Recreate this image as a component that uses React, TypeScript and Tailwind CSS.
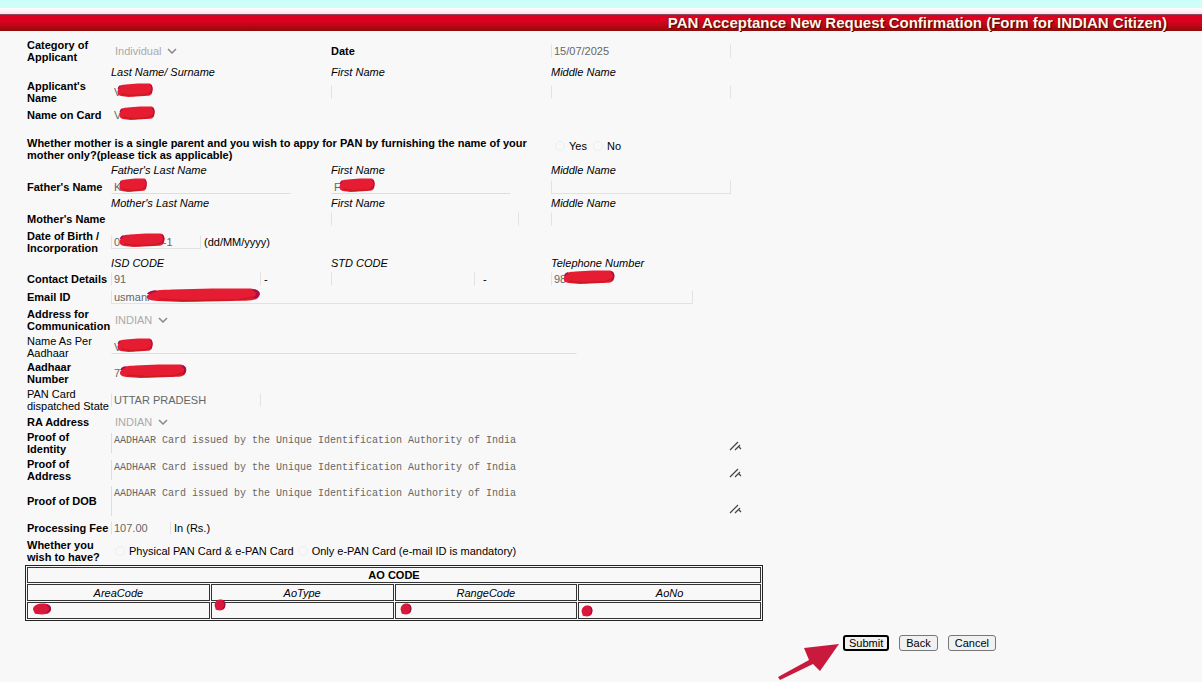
import { type ReactNode } from "react";
import clsx from "clsx";

const PROOF = "AADHAAR Card issued by the Unique Identification Authority of India";

// Hand-drawn marker stroke that hides private values
function Scribble({ className }: { className: string }) {
  return (
    <svg viewBox="0 0 100 30" preserveAspectRatio="none" className={clsx("absolute pointer-events-none", className)} aria-hidden="true">
      <path d="M3 14C7 3 14 4 24 3L58 1L91 1C99 3 101 12 97 22C93 29 84 27 75 28L32 30L11 28C3 27-1 21 3 14Z" fill="#e51c32" />
      <path d="M12 24L42 27L82 25L94 19" fill="none" stroke="#c51c20" strokeWidth="3" />
      <path d="M3 13C5 7 8 7 10 6M93 4C99 8 98 16 94 22" fill="none" stroke="#a80f49" strokeWidth="3" />
    </svg>
  );
}

// Single marker dab used in the narrow AO cells
function Dab({ className }: { className: string }) {
  return (
    <svg viewBox="0 0 20 20" preserveAspectRatio="none" className={clsx("absolute pointer-events-none", className)} aria-hidden="true">
      <path d="M1 11C1 4 6 1 11 1C17 1 19 5 19 10C19 16 16 19 10 19L3 18Z" fill="#d9183c" />
      <path d="M15 3C19 7 19 12 15 16" fill="none" stroke="#8f1442" strokeWidth="2" />
    </svg>
  );
}

function Row({ id, label, plain, height, children }: { id?: string; label: string; plain?: boolean; height: string; children: ReactNode }) {
  return (
    <div className={clsx("grid grid-cols-[86px_220px_220px_1fr] items-center", height)}>
      <label htmlFor={id} className={clsx("pl-0.5", !plain && "font-bold")}>{label}</label>
      {children}
    </div>
  );
}

function Hints({ items, height }: { items: string[]; height: string }) {
  return (
    <div className={clsx("grid grid-cols-[86px_220px_220px_1fr] items-center italic", height)}>
      <span />
      {items.map((item, i) => (
        <span key={i}>{item}</span>
      ))}
    </div>
  );
}

function Field({ id, label, value = "", width, edges = "border-transparent", scribble }: {
  id?: string;
  label: string;
  value?: string;
  width: string;
  edges?: string;
  scribble?: string;
}) {
  return (
    <span className={clsx("relative block", width)}>
      <input
        id={id}
        aria-label={label}
        defaultValue={value}
        className={clsx("block w-full h-3.5 pl-0.5 bg-transparent border text-[11px] leading-3 text-[#666] outline-none", edges)}
      />
      {scribble && <Scribble className={scribble} />}
    </span>
  );
}

function Dropdown({ id, value, width }: { id: string; value: string; width: string }) {
  return (
    <span className={clsx("relative block", width)}>
      <select id={id} className="block w-full h-3.5 pl-1 appearance-none bg-transparent text-[11px] leading-3 text-[#aaa]">
        <option>{value}</option>
      </select>
      <svg viewBox="0 0 10 6" className="absolute right-0 top-1 w-2.5 h-1.5 pointer-events-none" aria-hidden="true">
        <path d="M1 1L5 5L9 1" fill="none" stroke="#888" strokeWidth="1.5" />
      </svg>
    </span>
  );
}

function Proof({ id, height }: { id: string; height: string }) {
  return (
    <span className="relative col-span-3 block w-[631px]">
      <textarea
        id={id}
        defaultValue={PROOF}
        className={clsx("block w-full px-0.5 pt-0.5 resize-none overflow-hidden bg-transparent border-l border-[#ddd] font-['Liberation_Mono',monospace] text-[10px] leading-3 text-[#666] outline-none", height)}
      />
      <svg viewBox="0 0 13 10" className="absolute right-0 bottom-0.5 w-[13px] h-2.5 pointer-events-none" aria-hidden="true">
        <path d="M1 9L9 1M6 9L11 4M10 6L12 8" fill="none" stroke="#444" strokeWidth="1.2" />
      </svg>
    </span>
  );
}

function Radio({ name, text }: { name: string; text: string }) {
  return (
    <label className="flex items-center gap-1">
      <input type="radio" name={name} className="size-2.5 appearance-none rounded-full border border-[#eee]" />
      {text}
    </label>
  );
}

const left = "border-transparent border-l-[#e2e2e2]";
const sides = "border-transparent border-x-[#e2e2e2]";
const bottom = "border-transparent border-b-[#dedede]";
const open = "border-[#e2e2e2] border-t-transparent";

const aoColumns = [
  { name: "AreaCode", dab: "left-1 top-0 w-5 h-3" },
  { name: "AoType", dab: "left-0.5 -top-1 w-3 h-3" },
  { name: "RangeCode", dab: "left-1 top-0 w-3 h-3" },
  { name: "AoNo", dab: "left-0.5 top-0.5 w-3 h-3" },
];

const buttonClass = "h-4 rounded-[3px] bg-[#f1f1f1] text-[11px] leading-3";

export default function App() {
  return (
    <div className="min-h-screen bg-[#f8f8f8] font-['Liberation_Sans',Arial,sans-serif] text-[11px] leading-3 text-black">
      <header>
        <div className="h-2 bg-[#ccfff8]" />
        <div className="h-1.5 bg-linear-to-b from-white to-[#fbe0ef]" />
        <div className="h-[17px] pr-[35px] border-t border-[#8c4a5b] bg-linear-to-b from-[#dc0020] from-40% to-[#900b08] text-right">
          <h1 className="text-[15px] leading-4 font-bold text-[#fff5e4] [text-shadow:1px_1px_0_#5b0808,-1px_0_0_#8b0808]">
            PAN Acceptance New Request Confirmation (Form for INDIAN Citizen)
          </h1>
        </div>
      </header>

      <form className="pt-[7px] pl-[25px]" onSubmit={(e) => e.preventDefault()}>
        <Row id="category" label="Category of Applicant" height="h-[26px]">
          <Dropdown id="category" value="Individual" width="w-[66px]" />
          <label htmlFor="date" className="font-bold">Date</label>
          <Field id="date" label="Date" value="15/07/2025" width="w-[180px]" edges={sides} />
        </Row>
        <Hints items={["Last Name/ Surname", "First Name", "Middle Name"]} height="h-4" />
        <Row id="last" label="Applicant's Name" height="h-6">
          <Field id="last" label="Last Name" value="V" width="w-[180px]" scribble="left-1.5 -top-0.5 w-9 h-3.5" />
          <Field label="First Name" width="w-[188px]" edges={left} />
          <Field label="Middle Name" width="w-[180px]" edges={sides} />
        </Row>
        <Row id="card" label="Name on Card" height="h-[22px]">
          <Field id="card" label="Name on Card" value="V" width="w-[180px]" scribble="left-2 -top-0.5 w-9 h-3.5" />
        </Row>

        <fieldset className="mt-2.5 grid grid-cols-[526px_1fr] h-[26px] items-center">
          <span className="w-[520px] pl-0.5 font-bold">
            Whether mother is a single parent and you wish to appy for PAN by furnishing the name of your mother only?(please tick as applicable)
          </span>
          <span className="flex gap-1.5 pl-1 pt-1 self-start">
            <Radio name="mother" text="Yes" />
            <Radio name="mother" text="No" />
          </span>
        </fieldset>

        <Hints items={["Father's Last Name", "First Name", "Middle Name"]} height="h-4" />
        <Row id="father" label="Father's Name" height="h-[18px]">
          <Field id="father" label="Father's Last Name" value="K" width="w-[180px]" edges={bottom} scribble="left-2 -top-0.5 w-7 h-3.5" />
          <Field label="Father's First Name" value="F" width="w-[180px]" edges={bottom} scribble="left-2 -top-0.5 w-9 h-3.5" />
          <Field label="Father's Middle Name" width="w-[180px]" edges={open} />
        </Row>
        <Hints items={["Mother's Last Name", "First Name", "Middle Name"]} height="h-3.5" />
        <Row id="mother" label="Mother's Name" height="h-[18px]">
          <Field id="mother" label="Mother's Last Name" width="w-[180px]" />
          <Field label="Mother's First Name" width="w-[188px]" edges={sides} />
          <Field label="Mother's Middle Name" width="w-[180px]" edges={left} />
        </Row>
        <Row id="dob" label="Date of Birth / Incorporation" height="h-7">
          <span className="flex items-center gap-[3px]">
            <Field id="dob" label="Date of Birth" value="0--/---/------1" width="w-[90px]" edges={open} scribble="left-2 -top-0.5 w-[46px] h-3.5" />
            (dd/MM/yyyy)
          </span>
        </Row>
        <Hints items={["ISD CODE", "STD CODE", "Telephone Number"]} height="h-3.5" />
        <Row id="isd" label="Contact Details" height="h-[18px]">
          <span className="flex items-center gap-[3px]">
            <Field id="isd" label="ISD Code" value="91" width="w-[150px]" edges={sides} />-
          </span>
          <span className="flex items-center gap-2">
            <Field label="STD Code" width="w-36" edges={sides} />-
          </span>
          <Field label="Telephone Number" value="98" width="w-[150px]" edges={left} scribble="left-3 -top-0.5 w-[52px] h-3.5" />
        </Row>
        <Row id="email" label="Email ID" height="h-[18px]">
          <Field id="email" label="Email ID" value="usmani" width="col-span-3 w-[582px]" edges={open} scribble="left-[34px] -top-0.5 w-[116px] h-3.5" />
        </Row>
        <Row id="communication" label="Address for Communication" height="h-7">
          <Dropdown id="communication" value="INDIAN" width="w-[57px]" />
        </Row>
        <Row id="aadhaar-name" label="Name As Per Aadhaar" plain height="h-[26px]">
          <Field id="aadhaar-name" label="Name As Per Aadhaar" value="V" width="col-span-3 w-[466px]" edges={bottom} scribble="left-1.5 -top-0.5 w-9 h-3.5" />
        </Row>
        <Row id="aadhaar" label="Aadhaar Number" height="h-[26px]">
          <Field id="aadhaar" label="Aadhaar Number" value="7" width="w-[90px]" scribble="left-2 -top-0.5 w-[68px] h-3.5" />
        </Row>
        <Row id="state" label="PAN Card dispatched State" plain height="h-7">
          <Field id="state" label="PAN Card dispatched State" value="UTTAR PRADESH" width="w-[150px]" edges={sides} />
        </Row>
        <Row id="ra" label="RA Address" height="h-4">
          <Dropdown id="ra" value="INDIAN" width="w-[57px]" />
        </Row>
        <Row id="identity" label="Proof of Identity" height="h-[26px]">
          <Proof id="identity" height="h-5" />
        </Row>
        <Row id="address" label="Proof of Address" height="h-7">
          <Proof id="address" height="h-5" />
        </Row>
        <Row id="proof-dob" label="Proof of DOB" height="h-[34px]">
          <Proof id="proof-dob" height="h-[30px]" />
        </Row>
        <Row id="fee" label="Processing Fee" height="h-5">
          <span className="flex items-center gap-[3px]">
            <Field id="fee" label="Processing Fee" value="107.00" width="w-[60px]" edges={sides} />
            In (Rs.)
          </span>
        </Row>
        <fieldset className="grid grid-cols-[86px_1fr] h-[26px] items-center">
          <span className="pl-0.5 font-bold">Whether you wish to have?</span>
          <span className="flex gap-1 pl-1">
            <Radio name="card-type" text="Physical PAN Card & e-PAN Card" />
            <Radio name="card-type" text="Only e-PAN Card (e-mail ID is mandatory)" />
          </span>
        </fieldset>

        <table className="mt-px w-[738px] table-fixed border border-[#222] border-separate border-spacing-px">
          <thead>
            <tr>
              <th colSpan={4} className="h-4 border border-[#333] p-0">AO CODE</th>
            </tr>
            <tr>
              {aoColumns.map((col) => (
                <th key={col.name} className="h-[17px] border border-[#333] p-0 font-normal italic">{col.name}</th>
              ))}
            </tr>
          </thead>
          <tbody>
            <tr>
              {aoColumns.map((col) => (
                <td key={col.name} className="h-[17px] border border-[#333] p-0 relative">
                  <Dab className={col.dab} />
                </td>
              ))}
            </tr>
          </tbody>
        </table>

        <div className="flex items-start pt-3.5 pl-[752px]">
          <svg viewBox="0 0 62 38" className="mt-2 w-[62px] h-[38px]" aria-hidden="true">
            <path d="M1 34L32 17L27 5L62 1L43 28L36 21L3 37Z" fill="#c91a3e" />
          </svg>
          <div className="flex gap-2.5 pl-1">
            <button type="submit" className={clsx(buttonClass, "px-1 border-2 border-black")}>Submit</button>
            <button type="button" className={clsx(buttonClass, "px-1.5 border border-[#777]")}>Back</button>
            <button type="button" className={clsx(buttonClass, "px-1.5 border border-[#777]")}>Cancel</button>
          </div>
        </div>
      </form>
    </div>
  );
}
